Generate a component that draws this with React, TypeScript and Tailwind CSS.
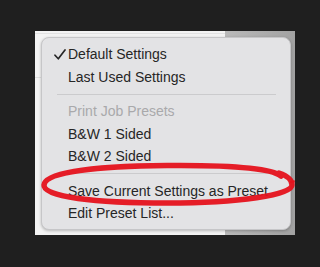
const Row = ({
  label,
  checked = false,
  disabled = false,
}: {
  label: string;
  checked?: boolean;
  disabled?: boolean;
}) => {
  return (
    <li
      className={`flex h-[22.5px] items-center text-[14px] leading-none ${
        disabled ? "text-[#a9a9ab]" : "text-[#262626]"
      }`}
    >
      <span className="flex w-[26px] shrink-0 justify-end pr-[2px]">
        {checked && (
          <svg width="12" height="11" viewBox="0 0 12 11" fill="none">
            <path
              d="M1 6.2 L4.3 9.8 L11 1"
              stroke="#262626"
              strokeWidth="1.7"
              strokeLinecap="round"
              strokeLinejoin="round"
            />
          </svg>
        )}
      </span>
      <span>{label}</span>
    </li>
  );
};

const Separator = () => (
  <li className="flex h-[12px] items-center pl-[15px] pr-[14px]">
    <div className="h-px w-full bg-[#cbcbcd]" />
  </li>
);

const App = () => {
  return (
    <div
      className="h-[267px] w-[320px] bg-[#1f1f1f] pl-[35px] pt-[31px]"
      style={{ fontFamily: '"Liberation Sans", Arial, sans-serif' }}
    >
      <div className="relative flex h-[204px] w-[260px]">
        {/* window behind the popup */}
        <div className="flex w-[190px] flex-col bg-[#f3f3f3]">
          <div className="h-[3px] border-b border-[#e2e2e2]" />
          <div className="h-[44px] border-b border-[#dedede]" />
        </div>
        <div className="w-[70px] bg-gradient-to-r from-[#b9b9b9] to-[#a2a2a2]" />

        {/* popup menu */}
        <div className="absolute left-[6px] top-[6px] h-[193px] w-[250px] rounded-[8px] border border-[#c6c6c8] bg-[#e3e3e5] pt-[5px] shadow-[0_1px_3px_rgba(0,0,0,0.25)]">
          <ul>
            <Row label="Default Settings" checked />
            <Row label="Last Used Settings" />
            <Separator />
            <Row label="Print Job Presets" disabled />
            <Row label="B&W 1 Sided" />
            <Row label="B&W 2 Sided" />
            <Separator />
            <Row label="Save Current Settings as Preset" />
            <Row label="Edit Preset List..." />
          </ul>
        </div>

        {/* red annotation ring */}
        <svg
          className="pointer-events-none absolute left-0 top-0"
          width="260"
          height="204"
          viewBox="0 0 260 204"
          fill="none"
        >
          <path
            d="M246 145 C 236 137, 190 134, 132 134.5 C 62 135, 10 141, 9 154 C 8 166, 60 172, 132 172 C 204 172, 257 164, 257 154 C 257 148, 250 144, 244 142"
            stroke="#e5121c"
            strokeWidth="5.5"
            strokeLinecap="round"
            opacity="0.95"
          />
          <path
            d="M256 151 L262 150"
            stroke="#e5121c"
            strokeWidth="2"
            strokeLinecap="round"
            opacity="0.8"
          />
        </svg>
      </div>
    </div>
  );
};

export default App;
